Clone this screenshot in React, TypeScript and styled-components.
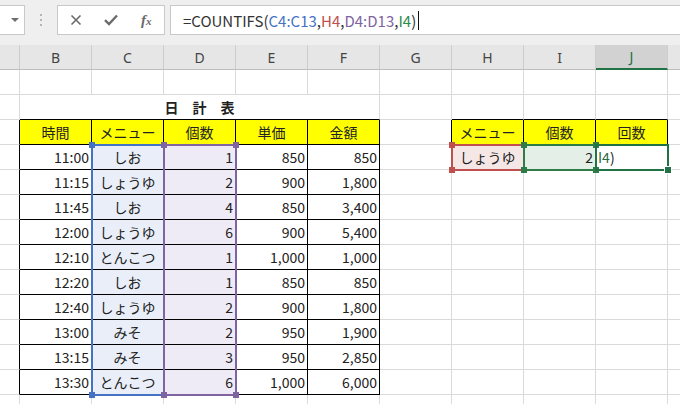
import React from 'react';
import styled, { createGlobalStyle } from 'styled-components';

const GlobalStyle = createGlobalStyle`
  html, body { margin: 0; padding: 0; background: #ffffff; }
  body { font-family: "Noto Sans CJK JP", "Noto Sans", sans-serif; }
`;

const Window = styled.div`
  width: 680px;
  height: 404px;
  overflow: hidden;
  background: #ffffff;
  display: flex;
  flex-direction: column;
`;

const FormulaBar = styled.div`
  height: 45px;
  flex: none;
  box-sizing: border-box;
  padding-top: 5px;
  background: #efefef;
  display: flex;
  align-items: flex-start;
`;

const NameBox = styled.div`
  width: 25px;
  height: 30px;
  box-sizing: border-box;
  background: #ffffff;
  border: 1px solid #c9c9c9;
  border-left: none;
  display: flex;
  align-items: center;
  justify-content: flex-end;
  padding-right: 5px;
`;

const DropArrow = styled.div`
  width: 0;
  height: 0;
  border-left: 4px solid transparent;
  border-right: 4px solid transparent;
  border-top: 4px solid #6d6d6d;
`;

const Grip = styled.div`
  width: 32px;
  height: 30px;
  display: flex;
  flex-direction: column;
  align-items: center;
  justify-content: center;
  gap: 3px;
`;

const GripDot = styled.span`
  width: 2px;
  height: 2px;
  background: #b4b4b4;
`;

const IconBox = styled.div`
  width: 108px;
  height: 30px;
  box-sizing: border-box;
  background: #ffffff;
  border: 1px solid #c9c9c9;
  display: grid;
  grid-template-columns: repeat(3, 1fr);
  align-items: center;
  justify-items: center;
`;

const FxIcon = styled.span`
  font-family: "Liberation Serif", "DejaVu Serif", serif;
  font-style: italic;
  font-weight: bold;
  font-size: 15px;
  color: #6b6b6b;
  line-height: 1;
  & > small {
    font-size: 11px;
  }
`;

const FormulaBox = styled.div`
  flex: 1;
  margin-left: 5px;
  height: 30px;
  box-sizing: border-box;
  background: #ffffff;
  border: 1px solid #c9c9c9;
  border-right: none;
  display: flex;
  align-items: center;
  padding-left: 12px;
  font-size: 15px;
  color: #333333;
  white-space: nowrap;
`;

const Ref = styled.span<{ $color: string }>`
  color: ${(p) => p.$color};
`;

const Caret = styled.span`
  display: inline-block;
  width: 1px;
  height: 19px;
  background: #111111;
  margin-left: 2px;
`;

const ColHeaderRow = styled.div`
  height: 25px;
  flex: none;
  display: grid;
  grid-template-columns: 20px repeat(10, 72px);
  background: #e6e6e6;
`;

const ColHeader = styled.div<{ $active?: boolean }>`
  box-sizing: border-box;
  border-right: 1px solid #cdcdcd;
  border-bottom: ${(p) => (p.$active ? '2px solid #217346' : '1px solid #bdbdbd')};
  background: ${(p) => (p.$active ? '#d2d2d2' : 'transparent')};
  color: ${(p) => (p.$active ? '#217346' : '#444444')};
  font-family: "Noto Sans", "Open Sans", sans-serif;
  font-size: 14px;
  display: flex;
  align-items: center;
  justify-content: center;
`;

const Sheet = styled.div`
  flex: none;
  display: grid;
  grid-template-columns: 20px repeat(10, 72px);
  grid-template-rows: repeat(14, 25px);
`;

type Align = 'left' | 'center' | 'right';

const Cell = styled.div<{
  $row: number;
  $col: number;
  $span: number;
  $align: Align;
  $bg: string;
  $rb: boolean;
  $bb: boolean;
  $bold?: boolean;
}>`
  grid-row: ${(p) => p.$row};
  grid-column: ${(p) => p.$col + 1} / span ${(p) => p.$span};
  box-sizing: border-box;
  min-width: 0;
  background: ${(p) => p.$bg};
  border-right: 1px solid ${(p) => (p.$rb ? '#000000' : '#dadada')};
  border-bottom: 1px solid ${(p) => (p.$bb ? '#000000' : '#dadada')};
  display: flex;
  align-items: center;
  justify-content: ${(p) => (p.$align === 'left' ? 'flex-start' : p.$align === 'right' ? 'flex-end' : 'center')};
  padding: ${(p) => (p.$align === 'right' ? '0 2px 0 0' : p.$align === 'left' ? '0 0 0 2px' : '0')};
  font-size: 14px;
  font-weight: ${(p) => (p.$bold ? 700 : 400)};
  color: #222222;
  white-space: nowrap;
  overflow: visible;
  z-index: 1;
`;

const RangeFrame = styled.div<{ $row: number; $col: number; $rows: number; $color: string }>`
  grid-row: ${(p) => p.$row} / span ${(p) => p.$rows};
  grid-column: ${(p) => p.$col + 1};
  margin: -1px;
  border: 2px solid ${(p) => p.$color};
  position: relative;
  z-index: 3;
  pointer-events: none;
`;

const Handle = styled.span<{ $v: 'top' | 'bottom'; $h: 'left' | 'right'; $color: string }>`
  position: absolute;
  width: 6px;
  height: 6px;
  background: ${(p) => p.$color};
  ${(p) => p.$v}: -4px;
  ${(p) => p.$h}: -4px;
`;

const FillHandle = styled.span`
  position: absolute;
  width: 6px;
  height: 6px;
  background: #217346;
  outline: 1px solid #ffffff;
  bottom: -4px;
  right: -4px;
`;

type CellData = { text: string; align: Align; bg?: string; bold?: boolean; span?: number };

const YELLOW = '#ffff00';
const BLUE_FILL = '#e9eef8';
const PURPLE_FILL = '#efebf6';

const rows: [string, string, string, string, string][] = [
  ['11:00', 'しお', '1', '850', '850'],
  ['11:15', 'しょうゆ', '2', '900', '1,800'],
  ['11:45', 'しお', '4', '850', '3,400'],
  ['12:00', 'しょうゆ', '6', '900', '5,400'],
  ['12:10', 'とんこつ', '1', '1,000', '1,000'],
  ['12:20', 'しお', '1', '850', '850'],
  ['12:40', 'しょうゆ', '2', '900', '1,800'],
  ['13:00', 'みそ', '2', '950', '1,900'],
  ['13:15', 'みそ', '3', '950', '2,850'],
  ['13:30', 'とんこつ', '6', '1,000', '6,000'],
];

const cells: Record<string, CellData> = {};
cells['2-1'] = { text: '日　計　表', align: 'center', bold: true, span: 5 };
['時間', 'メニュー', '個数', '単価', '金額'].forEach((t, i) => {
  cells[`3-${i + 1}`] = { text: t, align: 'center', bg: YELLOW };
});
['メニュー', '個数', '回数'].forEach((t, i) => {
  cells[`3-${i + 7}`] = { text: t, align: 'center', bg: YELLOW };
});
rows.forEach((r, i) => {
  const row = i + 4;
  cells[`${row}-1`] = { text: r[0], align: 'right' };
  cells[`${row}-2`] = { text: r[1], align: 'center', bg: BLUE_FILL };
  cells[`${row}-3`] = { text: r[2], align: 'right', bg: PURPLE_FILL };
  cells[`${row}-4`] = { text: r[3], align: 'right' };
  cells[`${row}-5`] = { text: r[4], align: 'right' };
});
cells['4-7'] = { text: 'しょうゆ', align: 'center', bg: '#f6e7e7' };
cells['4-8'] = { text: '2', align: 'right', bg: '#e4efe7' };
cells['4-9'] = { text: 'I4)', align: 'left' };

const inTable = (r: number, c: number) =>
  (r >= 3 && r <= 13 && c >= 1 && c <= 5) || (r >= 3 && r <= 4 && c >= 7 && c <= 9);

const covered = (r: number, c: number) => r === 2 && c >= 2 && c <= 5;

const COL_LETTERS = ['', 'B', 'C', 'D', 'E', 'F', 'G', 'H', 'I', 'J', ''];

type Corner = ['top' | 'bottom', 'left' | 'right'];
const ALL_CORNERS: Corner[] = [
  ['top', 'left'],
  ['top', 'right'],
  ['bottom', 'left'],
  ['bottom', 'right'],
];

const ranges = [
  { row: 4, col: 2, rows: 10, color: '#4472c4' },
  { row: 4, col: 3, rows: 10, color: '#8064a2' },
  { row: 4, col: 7, rows: 1, color: '#c0504d' },
  { row: 4, col: 8, rows: 1, color: '#2e7d48' },
];

const CloseIcon = () => (
  <svg width="12" height="12" viewBox="0 0 12 12">
    <path d="M1.5 1.5 L10.5 10.5 M10.5 1.5 L1.5 10.5" stroke="#6b6b6b" strokeWidth="1.6" fill="none" />
  </svg>
);

const CheckIcon = () => (
  <svg width="14" height="12" viewBox="0 0 14 12">
    <path d="M1 6.2 L5 10 L13 1.5" stroke="#6b6b6b" strokeWidth="2.4" fill="none" />
  </svg>
);

export default function App() {
  const gridCells: React.ReactNode[] = [];
  for (let r = 1; r <= 14; r++) {
    for (let c = 0; c <= 10; c++) {
      if (covered(r, c)) continue;
      const d = cells[`${r}-${c}`];
      const span = d?.span ?? 1;
      const last = c + span - 1;
      let bb = false;
      for (let k = c; k <= last; k++) if (inTable(r, k) || inTable(r + 1, k)) bb = true;
      const rb = inTable(r, last) || inTable(r, last + 1);
      gridCells.push(
        <Cell
          key={`${r}-${c}`}
          $row={r}
          $col={c}
          $span={span}
          $align={d?.align ?? 'left'}
          $bg={d?.bg ?? 'transparent'}
          $rb={rb}
          $bb={bb}
          $bold={d?.bold}
        >
          {d?.text === 'I4)' ? (
            <>
              <Ref $color="#2e6b3f">I4</Ref>)
            </>
          ) : (
            d?.text
          )}
        </Cell>
      );
    }
  }

  return (
    <>
      <GlobalStyle />
      <Window>
        <FormulaBar>
          <NameBox>
            <DropArrow />
          </NameBox>
          <Grip>
            <GripDot />
            <GripDot />
            <GripDot />
          </Grip>
          <IconBox>
            <CloseIcon />
            <CheckIcon />
            <FxIcon>
              f<small>x</small>
            </FxIcon>
          </IconBox>
          <FormulaBox>
            =COUNTIFS(<Ref $color="#4472c4">C4:C13</Ref>,<Ref $color="#c0504d">H4</Ref>,
            <Ref $color="#8064a2">D4:D13</Ref>,<Ref $color="#2e8b4a">I4</Ref>)
            <Caret />
          </FormulaBox>
        </FormulaBar>
        <ColHeaderRow>
          {COL_LETTERS.map((l, i) => (
            <ColHeader key={i} $active={i === 9}>
              {l}
            </ColHeader>
          ))}
        </ColHeaderRow>
        <Sheet>
          {gridCells}
          {ranges.map((rg, i) => (
            <RangeFrame key={i} $row={rg.row} $col={rg.col} $rows={rg.rows} $color={rg.color}>
              {ALL_CORNERS.map(([v, h]) => (
                <Handle key={v + h} $v={v} $h={h} $color={rg.color} />
              ))}
            </RangeFrame>
          ))}
          <RangeFrame $row={4} $col={9} $rows={1} $color="#217346">
            <FillHandle />
          </RangeFrame>
        </Sheet>
      </Window>
    </>
  );
}
